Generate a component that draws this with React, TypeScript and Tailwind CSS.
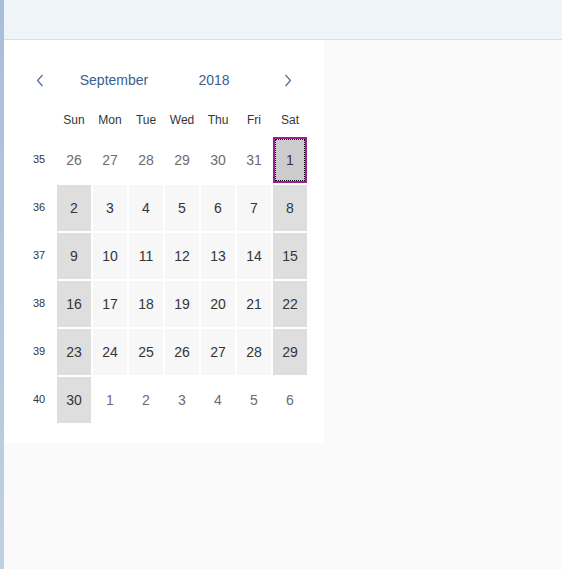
import React from 'react'

// Calendar data for September 2018 (weeks 35-40)
const weeks: { num: number; days: { d: number; other?: boolean }[] }[] = [
  { num: 35, days: [26, 27, 28, 29, 30, 31].map((d) => ({ d, other: true })).concat([{ d: 1 }]) },
  { num: 36, days: [2, 3, 4, 5, 6, 7, 8].map((d) => ({ d })) },
  { num: 37, days: [9, 10, 11, 12, 13, 14, 15].map((d) => ({ d })) },
  { num: 38, days: [16, 17, 18, 19, 20, 21, 22].map((d) => ({ d })) },
  { num: 39, days: [23, 24, 25, 26, 27, 28, 29].map((d) => ({ d })) },
  { num: 40, days: [{ d: 30 }].concat([1, 2, 3, 4, 5, 6].map((d) => ({ d, other: true }))) },
]

const dayNames = ['Sun', 'Mon', 'Tue', 'Wed', 'Thu', 'Fri', 'Sat']

function Chevron({ dir }: { dir: 'left' | 'right' }) {
  return (
    <svg width="8" height="13" viewBox="0 0 8 13" fill="none">
      <polyline
        points={dir === 'left' ? '6.5,1 1.5,6.5 6.5,12' : '1.5,1 6.5,6.5 1.5,12'}
        stroke="#4a6f98"
        strokeWidth="1.2"
      />
    </svg>
  )
}

function DayCell({ d, other, weekend }: { d: number; other?: boolean; weekend: boolean }) {
  const selected = !other && d === 1
  if (selected) {
    return (
      <div className="flex h-[46px] w-[34px] items-center justify-center border-2 border-[#9b1f8e] bg-[#cccccc]">
        <div className="flex h-full w-full items-center justify-center border border-dotted border-black text-[14px] text-[#32363a]">
          {d}
        </div>
      </div>
    )
  }
  const bg = other ? 'bg-white' : weekend ? 'bg-[#dedede]' : 'bg-[#f7f7f7]'
  const color = other ? 'text-[#6a6d70]' : 'text-[#32363a]'
  return (
    <div className={`flex h-[46px] w-[34px] items-center justify-center text-[14px] ${bg} ${color}`}>
      {d}
    </div>
  )
}

export default function App() {
  return (
    <div className="flex h-screen w-full font-['Liberation_Sans',Arial,sans-serif]">
      {/* Barra lateral fina */}
      <div className="h-full w-[4px] bg-gradient-to-b from-[#a7bedb] to-[#c1d0e1]" />
      <div className="flex h-full flex-1 flex-col">
        {/* Cabeçalho */}
        <div className="h-[40px] border-b border-[#d3dfe9] bg-[#eff4f9]" />
        <div className="flex flex-1 bg-[#fafafa]">
          {/* Painel do calendário */}
          <div className="h-[403px] w-[320px] bg-white pl-[19px] pt-[21px]">
            <div className="flex h-[38px] items-center">
              <button className="flex w-[34px] items-center justify-center">
                <Chevron dir="left" />
              </button>
              <button className="w-[114px] text-center text-[14px] text-[#3a6190]">September</button>
              <button className="w-[86px] text-center text-[14px] text-[#3a6190]">2018</button>
              <button className="flex w-[62px] items-center justify-center">
                <Chevron dir="right" />
              </button>
            </div>
            <div className="mt-[4px] flex h-[34px] items-center gap-[2px]">
              <div className="w-[32px]" />
              {dayNames.map((n) => (
                <div key={n} className="w-[34px] text-center text-[12px] text-[#32363a]">
                  {n}
                </div>
              ))}
            </div>
            <div className="flex flex-col gap-[2px]">
              {weeks.map((w) => (
                <div key={w.num} className="flex gap-[2px]">
                  <div className="flex h-[46px] w-[32px] items-center justify-center pb-[2px] text-[11px] text-[#32363a]">
                    {w.num}
                  </div>
                  {w.days.map((day, i) => (
                    <DayCell key={i} d={day.d} other={day.other} weekend={i === 0 || i === 6} />
                  ))}
                </div>
              ))}
            </div>
          </div>
        </div>
      </div>
    </div>
  )
}
